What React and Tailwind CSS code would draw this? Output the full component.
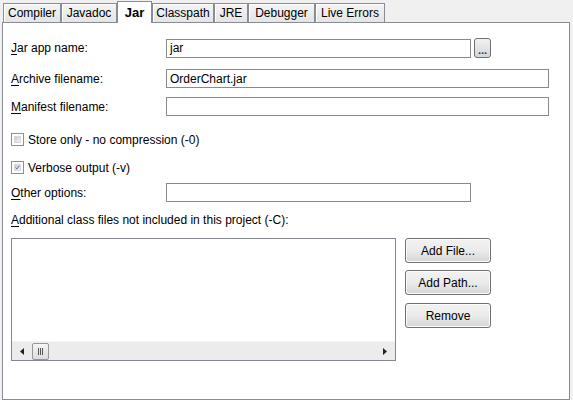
import React from 'react';

const tabs = [
  { name: 'Compiler', w: 'w-[58px]' },
  { name: 'Javadoc', w: 'w-[56px]' },
  { name: 'Jar', w: 'w-[35px]', active: true },
  { name: 'Classpath', w: 'w-[62px]' },
  { name: 'JRE', w: 'w-[34px]' },
  { name: 'Debugger', w: 'w-[67px]' },
  { name: 'Live Errors', w: 'w-[70px]' },
];

const Mn = ({ c, rest }) => (
  <span>
    <span className="underline underline-offset-[2px]">{c}</span>
    {rest}
  </span>
);

const TextBox = ({ w, value }) => (
  <div className={`${w} h-[19px] border border-[#878a90] bg-white pl-[3px] flex items-center`}>
    {value}
  </div>
);

const CheckBox = ({ checked, label }) => (
  <div className="flex items-center h-[13px]">
    <div className="w-[13px] h-[13px] border border-[#8e8f8f] bg-white p-[2px]">
      <div className="w-full h-full bg-gradient-to-br from-[#cbcbcb] to-[#f4f4f4] border border-[#d8d8d8] flex items-center justify-center">
        {checked && (
          <svg width="9" height="9" viewBox="0 0 9 9">
            <path d="M1 4.5 L3.5 7 L8 1.2" fill="none" stroke="#4a5f97" strokeWidth="1.6" />
          </svg>
        )}
      </div>
    </div>
    <span className="ml-[4px]">{label}</span>
  </div>
);

const PushButton = ({ children, className = '' }) => (
  <div
    className={`w-[86px] h-[25px] rounded-[3px] border border-[#707070] bg-gradient-to-b from-[#f2f2f2] via-[#ebebeb] to-[#d5d5d5] shadow-[inset_0_0_0_1px_#fcfcfc] flex items-center justify-center ${className}`}
  >
    {children}
  </div>
);

const App = () => {
  return (
    <div className="w-[573px] h-[400px] bg-[#f0f0f0] font-['Liberation_Sans',Arial,sans-serif] text-[12px] leading-[14px] text-black overflow-hidden">
      {/* Tabs */}
      <div className="h-[22px] flex items-end pl-[3px]">
        {tabs.map((t) =>
          t.active ? (
            <div
              key={t.name}
              className={`${t.w} h-[22px] relative top-[1px] z-10 bg-white border border-b-0 border-[#898c95] flex items-center justify-center font-bold text-[13px]`}
            >
              {t.name}
            </div>
          ) : (
            <div
              key={t.name}
              className={`${t.w} h-[19px] border border-b-0 border-[#898c95] bg-gradient-to-b from-[#f4f4f4] to-[#e4e4e4] shadow-[inset_1px_1px_0_#ffffff] flex items-center justify-center`}
            >
              {t.name}
            </div>
          )
        )}
      </div>

      {/* Panel */}
      <div className="ml-[2px] w-[568px] h-[378px] border border-[#898c95] bg-white pl-[8px] pt-[15px]">
        <div className="flex items-center h-[20px]">
          <div className="w-[155px]">
            <Mn c="J" rest="ar app name:" />
          </div>
          <TextBox w="w-[305px]" value="jar" />
          <div className="ml-[3px] w-[17px] h-[20px] rounded-[3px] border border-[#707070] bg-gradient-to-b from-[#f2f2f2] to-[#d6d6d6] flex items-end justify-center pb-[3px] text-[11px] leading-[8px] font-bold text-[#1c3d6e]">
            ...
          </div>
        </div>

        <div className="flex items-center h-[19px] mt-[11px]">
          <div className="w-[155px]">
            <Mn c="A" rest="rchive filename:" />
          </div>
          <TextBox w="w-[383px]" value="OrderChart.jar" />
        </div>

        <div className="flex items-center h-[19px] mt-[9px]">
          <div className="w-[155px]">
            <Mn c="M" rest="anifest filename:" />
          </div>
          <TextBox w="w-[383px]" value="" />
        </div>

        <div className="mt-[17px]">
          <CheckBox label="Store only - no compression (-0)" />
        </div>
        <div className="mt-[15px]">
          <CheckBox checked label="Verbose output (-v)" />
        </div>

        <div className="flex items-center h-[19px] mt-[9px]">
          <div className="w-[155px]">
            <Mn c="O" rest="ther options:" />
          </div>
          <TextBox w="w-[305px]" value="" />
        </div>

        <div className="mt-[11px] h-[14px]">
          <Mn c="A" rest="dditional class files not included in this project (-C):" />
        </div>

        <div className="mt-[11px] flex">
          {/* List box */}
          <div className="w-[385px] h-[123px] border border-[#828790] bg-white flex flex-col">
            <div className="flex-1" />
            <div className="h-[19px] bg-[#ececec] border-t border-[#f5f5f5] flex items-center">
              <div className="w-[20px] flex justify-center">
                <svg width="4" height="7" viewBox="0 0 4 7">
                  <path d="M4 0 L0 3.5 L4 7 Z" fill="#222" />
                </svg>
              </div>
              <div className="w-[17px] h-[17px] rounded-[2px] border border-[#979797] bg-gradient-to-b from-[#f5f5f5] to-[#dcdcdc] flex items-center justify-center gap-[1px]">
                <div className="w-[1px] h-[7px] bg-[#555]" />
                <div className="w-[1px] h-[7px] bg-[#555]" />
                <div className="w-[1px] h-[7px] bg-[#555]" />
              </div>
              <div className="flex-1" />
              <div className="w-[20px] flex justify-center">
                <svg width="4" height="7" viewBox="0 0 4 7">
                  <path d="M0 0 L4 3.5 L0 7 Z" fill="#222" />
                </svg>
              </div>
            </div>
          </div>

          {/* Buttons */}
          <div className="ml-[9px] flex flex-col">
            <PushButton>Add File...</PushButton>
            <PushButton className="mt-[7px]">Add Path...</PushButton>
            <PushButton className="mt-[8px]">Remove</PushButton>
          </div>
        </div>
      </div>
    </div>
  );
};

export default App;
